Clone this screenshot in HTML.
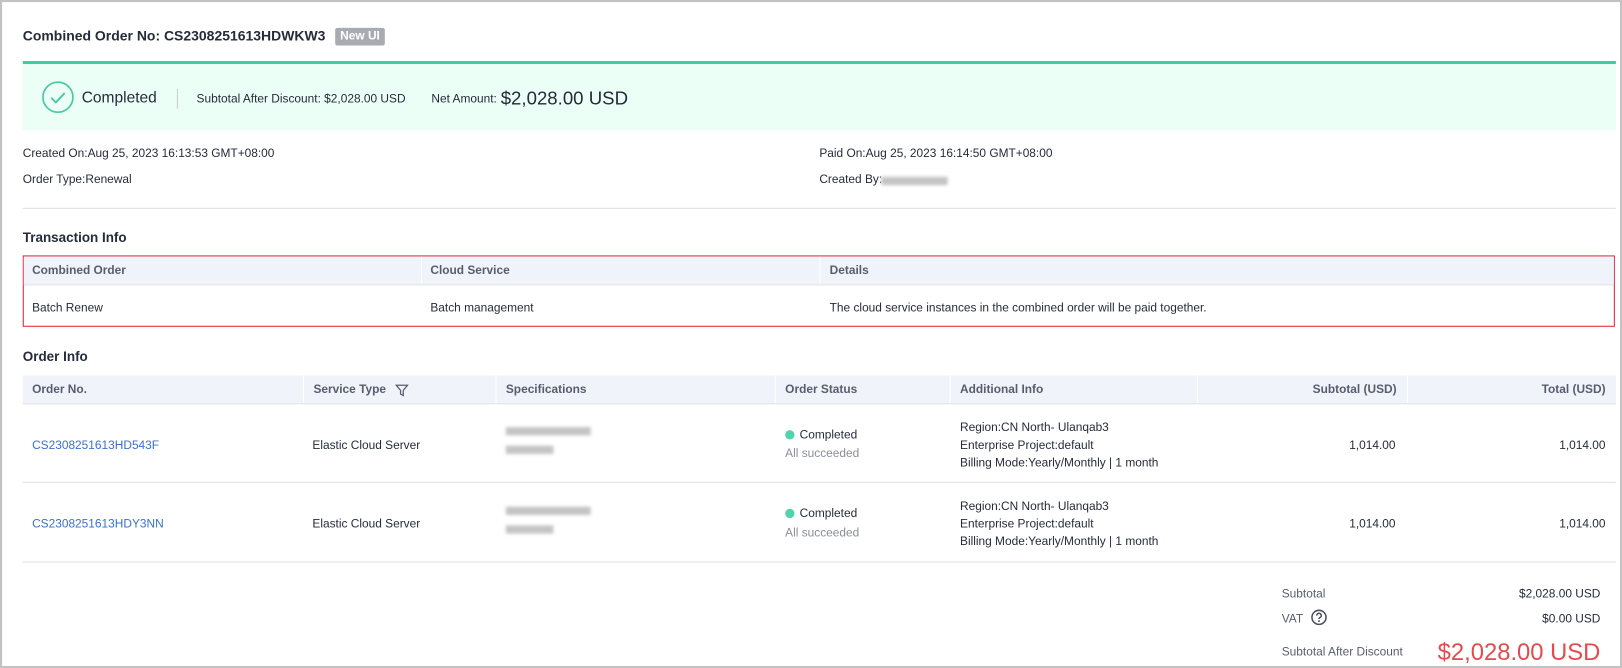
<!DOCTYPE html>
<html><head><meta charset="utf-8"><style>
html,body{margin:0;padding:0;background:#fff;overflow:hidden}
body{width:1622px;height:668px;font-family:"Liberation Sans",Arial,sans-serif;color:#252b3a}
#f{position:absolute;left:0;top:0;width:1568px;height:646px;transform:scale(1.0345,1.0341);transform-origin:0 0;box-sizing:border-box;border:2px solid #c2c2c2}
.a{position:absolute;white-space:nowrap;line-height:1}
.s12{font-size:11.5px;margin-top:2px}
.b{font-weight:bold}
.h{font-size:11.5px;font-weight:bold;color:#575d6c;margin-top:1px}
.sep{position:absolute;width:1px;background:#fff}
.line{position:absolute;height:1px;background:#dfe1e6}
.blur{position:absolute;background:#c4c4c4;filter:blur(1.5px);height:8px}
.lnk{color:#3b6fd0}
.dot{display:inline-block;width:9px;height:9px;border-radius:50%;background:#50d4ab;margin-right:5px;vertical-align:-1px}
.r{text-align:right}
</style></head><body><div id="f">
<div class="a b" style="left:20px;top:26px;font-size:13.5px">Combined Order No: CS2308251613HDWKW3</div>
<div class="a b" style="left:322px;top:25px;width:48px;height:17px;background:#a9abb2;color:#fff;font-size:11.5px;line-height:17px;text-align:center;border-radius:2px">New UI</div>
<div class="a" style="left:20px;top:57px;width:1540px;height:3px;background:#45c9a3"></div>
<div class="a" style="left:20px;top:60px;width:1540px;height:64px;background:#ebfff7"></div>
<svg class="a" style="left:38px;top:76px" width="32" height="32" viewBox="0 0 32 32"><circle cx="16" cy="16" r="14.5" fill="none" stroke="#45c9a3" stroke-width="1.6"/><path d="M9.5 16.5l4.5 4.5 8.5-9" fill="none" stroke="#45c9a3" stroke-width="1.8"/></svg>
<div class="a" style="left:77px;top:85px;font-size:15px">Completed</div>
<div class="a" style="left:169px;top:84px;width:1px;height:19px;background:#c8cbd2"></div>
<div class="a s12" style="left:188px;top:87px">Subtotal After Discount: $2,028.00 USD</div>
<div class="a s12" style="left:415px;top:87px">Net Amount:</div>
<div class="a" style="left:482px;top:84px;font-size:18px">$2,028.00 USD</div>
<div class="a s12" style="left:20px;top:140px">Created On:Aug 25, 2023 16:13:53 GMT+08:00</div>
<div class="a s12" style="left:790px;top:140px">Paid On:Aug 25, 2023 16:14:50 GMT+08:00</div>
<div class="a s12" style="left:20px;top:165px">Order Type:Renewal</div>
<div class="a s12" style="left:790px;top:165px">Created By:</div>
<div class="blur" style="left:850px;top:169px;width:64px"></div>
<div class="line" style="left:20px;top:199px;width:1540px"></div>
<div class="a b" style="left:20px;top:221px;font-size:13px">Transaction Info</div>
<div class="a" style="left:19.5px;top:244.5px;width:1537px;height:67px;border:1.5px solid #e5212f"></div>
<div class="a" style="left:21px;top:246px;width:1537px;height:27px;background:#f0f3fa"></div>
<div class="sep" style="left:405px;top:246px;height:27px"></div><div class="sep" style="left:790px;top:246px;height:27px"></div>
<div class="line" style="left:21px;top:273px;width:1537px"></div>
<div class="a h" style="left:29px;top:254px">Combined Order</div>
<div class="a h" style="left:414px;top:254px">Cloud Service</div>
<div class="a h" style="left:800px;top:254px">Details</div>
<div class="a s12" style="left:29px;top:289px">Batch Renew</div>
<div class="a s12" style="left:414px;top:289px">Batch management</div>
<div class="a s12" style="left:800px;top:289px">The cloud service instances in the combined order will be paid together.</div>
<div class="a b" style="left:20px;top:336px;font-size:13px">Order Info</div>
<div class="a" style="left:20px;top:361px;width:1540px;height:27px;background:#f0f3fa"></div>
<div class="sep" style="left:291px;top:361px;height:27px"></div><div class="sep" style="left:477px;top:361px;height:27px"></div><div class="sep" style="left:747px;top:361px;height:27px"></div><div class="sep" style="left:916px;top:361px;height:27px"></div><div class="sep" style="left:1155px;top:361px;height:27px"></div><div class="sep" style="left:1358px;top:361px;height:27px"></div>
<div class="line" style="left:20px;top:388px;width:1540px"></div>
<div class="a h" style="left:29px;top:369px">Order No.</div>
<div class="a h" style="left:301px;top:369px">Service Type</div>
<svg class="a" style="left:380px;top:369px" width="13" height="13" viewBox="0 0 13 13"><path d="M1 1.5h11L7.8 6.5v5L5.2 10V6.5z" fill="none" stroke="#575d6c" stroke-width="1.2"/></svg>
<div class="a h" style="left:487px;top:369px">Specifications</div>
<div class="a h" style="left:757px;top:369px">Order Status</div>
<div class="a h" style="left:926px;top:369px">Additional Info</div>
<div class="a h r" style="left:200px;top:369px;width:1148px">Subtotal (USD)</div>
<div class="a h r" style="left:400px;top:369px;width:1150px">Total (USD)</div>

<div class="a s12 lnk" style="left:29px;top:422px">CS2308251613HD543F</div>
<div class="a s12" style="left:300px;top:422px">Elastic Cloud Server</div>
<div class="blur" style="left:487px;top:411px;width:82px"></div><div class="blur" style="left:487px;top:429px;width:46px"></div>
<div class="a s12" style="left:757px;top:412px"><span class="dot"></span>Completed</div>
<div class="a s12" style="left:757px;top:430px;color:#8a8e99">All succeeded</div>
<div class="a s12" style="left:926px;top:404px;line-height:17px;margin-top:0">Region:CN North- Ulanqab3<br>Enterprise Project:default<br>Billing Mode:Yearly/Monthly | 1 month</div>
<div class="a s12 r" style="left:200px;top:422px;width:1147px">1,014.00</div>
<div class="a s12 r" style="left:400px;top:422px;width:1150px">1,014.00</div>
<div class="line" style="left:20px;top:464px;width:1540px"></div>

<div class="a s12 lnk" style="left:29px;top:498px">CS2308251613HDY3NN</div>
<div class="a s12" style="left:300px;top:498px">Elastic Cloud Server</div>
<div class="blur" style="left:487px;top:488px;width:82px"></div><div class="blur" style="left:487px;top:506px;width:46px"></div>
<div class="a s12" style="left:757px;top:488px"><span class="dot"></span>Completed</div>
<div class="a s12" style="left:757px;top:507px;color:#8a8e99">All succeeded</div>
<div class="a s12" style="left:926px;top:480px;line-height:17px;margin-top:0">Region:CN North- Ulanqab3<br>Enterprise Project:default<br>Billing Mode:Yearly/Monthly | 1 month</div>
<div class="a s12 r" style="left:200px;top:498px;width:1147px">1,014.00</div>
<div class="a s12 r" style="left:400px;top:498px;width:1150px">1,014.00</div>
<div class="line" style="left:20px;top:541px;width:1540px"></div>

<div class="a s12" style="left:1237px;top:566px;color:#575d6c">Subtotal</div>
<div class="a s12 r" style="left:300px;top:566px;width:1245px">$2,028.00 USD</div>
<div class="a s12" style="left:1237px;top:590px;color:#575d6c">VAT</div>
<svg class="a" style="left:1265px;top:587px" width="16" height="16" viewBox="0 0 16 16"><circle cx="8" cy="8" r="6.8" fill="none" stroke="#4a505e" stroke-width="1.5"/><path d="M5.8 6.3a2.2 2.2 0 1 1 3 2c-.6.3-.8.6-.8 1.3" fill="none" stroke="#4a505e" stroke-width="1.5"/><circle cx="8" cy="11.6" r=".9" fill="#4a505e"/></svg>
<div class="a s12 r" style="left:300px;top:590px;width:1245px">$0.00 USD</div>
<div class="a s12" style="left:1237px;top:622px;color:#575d6c">Subtotal After Discount</div>
<div class="a r" style="left:300px;top:617px;width:1245px;font-size:23px;color:#e54a4f">$2,028.00 USD</div>
</div></body></html>
